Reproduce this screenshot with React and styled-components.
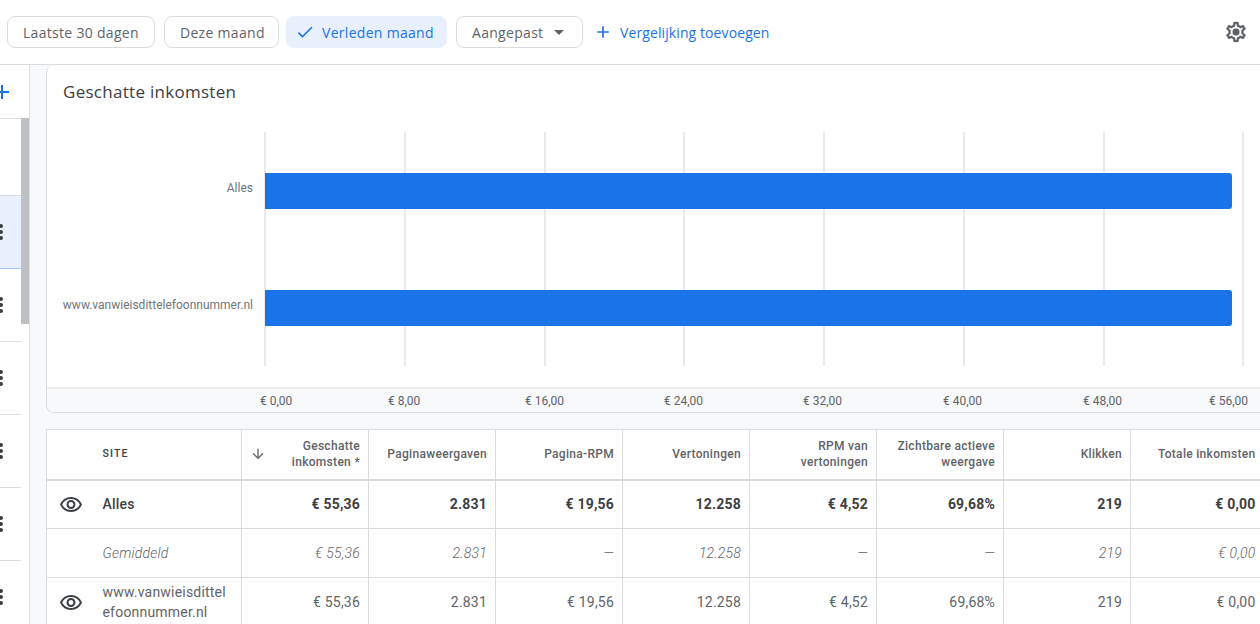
import React from 'react'
import styled, { createGlobalStyle } from 'styled-components'
import {
  MdAdd,
  MdArrowDownward,
  MdArrowDropDown,
  MdCheck,
  MdMoreVert,
  MdOutlineVisibility,
} from 'react-icons/md'

const GlobalStyle = createGlobalStyle`
  html, body {
    margin: 0;
    height: 100%;
    overflow: hidden;
    background: #fff;
    font-family: Roboto, "Liberation Sans", sans-serif;
  }
`

const Page = styled.div`
  position: relative;
  width: 1260px;
  height: 624px;
  overflow: hidden;
  background: #f8f9fa;
`

const Toolbar = styled.div`
  position: absolute;
  left: 0;
  top: 0;
  width: 1260px;
  height: 64px;
  box-sizing: content-box;
  background: #fff;
  border-bottom: 1px solid #dadce0;
`

const Chip = styled.div`
  position: absolute;
  top: 16px;
  left: ${p => p.$left}px;
  width: ${p => p.$width}px;
  height: 32px;
  box-sizing: border-box;
  display: flex;
  align-items: center;
  padding-left: ${p => (p.$active ? 8 : 15)}px;
  border-radius: 8px;
  border: 1px solid ${p => (p.$active ? '#e8f0fe' : '#dadce0')};
  background: ${p => (p.$active ? '#e8f0fe' : '#fff')};
  color: ${p => (p.$active ? '#1a73e8' : '#5f6368')};
  font-family: "Open Sans", sans-serif;
  font-size: 14px;
  letter-spacing: 0.3px;
  font-weight: 500;
  white-space: nowrap;
  svg { flex: none; }
`

const AddLink = styled.div`
  position: absolute;
  left: 593px;
  top: 20px;
  height: 24px;
  display: flex;
  align-items: center;
  gap: 7px;
  color: #1a73e8;
  font-family: "Open Sans", sans-serif;
  font-size: 14px;
  letter-spacing: 0.1px;
  font-weight: 500;
  white-space: nowrap;
`

const Gear = styled.svg`
  position: absolute;
  left: 1224px;
  top: 20px;
  width: 24px;
  height: 24px;
  fill: #5f6368;
  stroke: #5f6368;
  stroke-width: 0.3;
`

const Sidebar = styled.div`
  position: absolute;
  left: 0;
  top: 65px;
  width: 29px;
  height: 559px;
  box-sizing: content-box;
  background: #fff;
  border-right: 1px solid #dadce0;
`

const SidebarAdd = styled.div`
  position: absolute;
  left: -10px;
  top: 15px;
  color: #1a73e8;
  line-height: 0;
`

const SidebarHeadLine = styled.div`
  position: absolute;
  left: 0;
  top: 53px;
  width: 21px;
  height: 1px;
  background: #dadce0;
`

const Scrollbar = styled.div`
  position: absolute;
  left: 21px;
  top: 53px;
  width: 8px;
  height: 206px;
  background: #bdc1c6;
`

const SidebarRow = styled.div`
  position: absolute;
  left: 0;
  top: ${p => p.$top}px;
  width: 21px;
  height: ${p => (p.$selected ? 74 : 73)}px;
  box-sizing: border-box;
  background: ${p => (p.$selected ? '#e8f0fe' : '#fff')};
  border-top: ${p => (p.$selected ? '1px solid #dadce0' : '0')};
  border-bottom: 1px solid ${p => (p.$selected ? '#a8c7fa' : '#dadce0')};
  svg {
    position: absolute;
    left: -11px;
    top: 24px;
    color: #3c4043;
  }
`

const Card = styled.div`
  position: absolute;
  left: 46px;
  top: 65px;
  width: 1240px;
  height: 348px;
  box-sizing: border-box;
  background: #fff;
  border: 1px solid #dadce0;
  border-top: 0;
  border-radius: 8px;
  overflow: hidden;
`

const CardTitle = styled.h2`
  position: absolute;
  left: 16px;
  top: 14px;
  margin: 0;
  color: #3c4043;
  font-family: "Open Sans", sans-serif;
  font-size: 17px;
  letter-spacing: 0.28px;
  line-height: 26px;
  font-weight: 400;
  white-space: nowrap;
`

const GridLine = styled.div`
  position: absolute;
  top: 67px;
  left: ${p => p.$left}px;
  width: 2px;
  height: 234px;
  background: #e8eaed;
`

const Bar = styled.div`
  position: absolute;
  left: 218px;
  top: ${p => p.$top}px;
  width: 967px;
  height: 36px;
  background: #1a73e8;
  border-radius: 0 3px 3px 0;
`

const BarLabel = styled.div`
  position: absolute;
  right: 1032px;
  top: ${p => p.$top}px;
  color: #70757a;
  font-size: 12px;
  line-height: 16px;
  white-space: nowrap;
`

const AxisStrip = styled.div`
  position: absolute;
  left: 0;
  top: 322px;
  width: 100%;
  height: 25px;
  box-sizing: border-box;
  background: #f8f9fa;
  border-top: 2px solid #e8eaed;
`

const AxisLabel = styled.div`
  position: absolute;
  top: 4px;
  left: ${p => p.$left}px;
  color: #5f6368;
  font-size: 12px;
  line-height: 16px;
  white-space: nowrap;
`

const Table = styled.table`
  position: absolute;
  left: 46px;
  top: 429px;
  width: 1217px;
  table-layout: fixed;
  border-collapse: collapse;
  background: #fff;
  border-top: 1px solid #dadce0;
  color: #3c4043;
  font-size: 14px;
`

const Row = styled.tr`
  height: ${p => p.$height}px;
  font-weight: ${p => (p.$bold ? 700 : p.$italic ? 300 : 400)};
  font-style: ${p => (p.$italic ? 'italic' : 'normal')};
  color: ${p => (p.$bold ? '#3c4043' : '#5f6368')};
  border-bottom: 1px solid #dadce0;
`

const HeadRow = styled.tr`
  height: 50px;
  border-bottom: 2px solid #dadce0;
`

const Head = styled.th`
  padding: 0 8px;
  border-left: 1px solid #dadce0;
  text-align: right;
  vertical-align: middle;
  color: #5f6368;
  font-size: 12px;
  line-height: 16px;
  font-weight: 500;
  letter-spacing: 0.3px;
`

const SiteHead = styled(Head)`
  text-align: left;
  color: #3c4043;
  font-size: 10.5px;
  letter-spacing: 1.1px;
  border-left: 0;
  padding: 0 8px 0 0;
`

const SortedHead = styled(Head)`
  position: relative;
  svg {
    position: absolute;
    left: 8px;
    top: 16px;
    color: #5f6368;
  }
`

const EyeHead = styled.th`
  border-left: 1px solid #dadce0;
  padding: 0;
`

const Cell = styled.td`
  padding: 0 8px;
  border-left: 1px solid #dadce0;
  text-align: right;
  vertical-align: middle;
  white-space: nowrap;
  letter-spacing: 0.2px;
`

const EyeCell = styled.td`
  padding: 2px 0 0 12px;
  border-left: 1px solid #dadce0;
  line-height: 0;
  color: #3c4043;
`

const SiteCell = styled.td`
  padding: 0 12px 0 0;
  text-align: left;
  line-height: 20px;
  letter-spacing: 0.2px;
  word-break: break-all;
  font-weight: ${p => (p.$bold ? 500 : 'inherit')};
`

const ticks = [217, 357, 497, 636, 776, 916, 1056, 1195]

const axis = [
  ['€ 0,00', 213],
  ['€ 8,00', 341],
  ['€ 16,00', 478],
  ['€ 24,00', 617],
  ['€ 32,00', 756],
  ['€ 40,00', 896],
  ['€ 48,00', 1036],
  ['€ 56,00', 1162],
]

const headers = ['Paginaweergaven', 'Pagina-RPM', 'Vertoningen']

const sidebarRows = [204, 277, 350, 423, 496]

const rows = [
  {
    id: 'alles',
    bold: true,
    eye: true,
    site: 'Alles',
    height: 49,
    values: ['€ 55,36', '2.831', '€ 19,56', '12.258', '€ 4,52', '69,68%', '219', '€ 0,00'],
  },
  {
    id: 'gemiddeld',
    italic: true,
    site: 'Gemiddeld',
    height: 49,
    values: ['€ 55,36', '2.831', '—', '12.258', '—', '—', '219', '€ 0,00'],
  },
  {
    id: 'site',
    eye: true,
    site: 'www.vanwieisdittelefoonnummer.nl',
    height: 49,
    values: ['€ 55,36', '2.831', '€ 19,56', '12.258', '€ 4,52', '69,68%', '219', '€ 0,00'],
  },
]

export default function App() {
  return (
    <Page>
      <GlobalStyle />
      <Toolbar>
        <Chip $left={7} $width={148}>Laatste 30 dagen</Chip>
        <Chip $left={164} $width={115}>Deze maand</Chip>
        <Chip $left={286} $width={161} $active>
          <MdCheck size={20} style={{ marginRight: 7 }} />
          Verleden maand
        </Chip>
        <Chip $left={456} $width={127}>
          Aangepast
          <MdArrowDropDown size={24} style={{ marginLeft: 4 }} />
        </Chip>
        <AddLink>
          <MdAdd size={20} />
          Vergelijking toevoegen
        </AddLink>
        <Gear viewBox="0 0 24 24">
          <path d="M19.43 12.98c.04-.32.07-.64.07-.98 0-.34-.03-.66-.07-.98l2.11-1.65c.19-.15.24-.42.12-.64l-2-3.46c-.09-.16-.26-.25-.44-.25-.06 0-.12.01-.17.03l-2.49 1c-.52-.4-1.08-.73-1.69-.98l-.38-2.65C14.46 2.18 14.25 2 14 2h-4c-.25 0-.46.18-.49.42l-.38 2.65c-.61.25-1.17.59-1.69.98l-2.49-1c-.06-.02-.12-.03-.18-.03-.17 0-.34.09-.43.25l-2 3.46c-.13.22-.07.49.12.64l2.11 1.65c-.04.32-.07.65-.07.98 0 .33.03.66.07.98l-2.11 1.65c-.19.15-.24.42-.12.64l2 3.46c.09.16.26.25.44.25.06 0 .12-.01.17-.03l2.49-1c.52.4 1.08.73 1.69.98l.38 2.65c.03.24.24.42.49.42h4c.25 0 .46-.18.49-.42l.38-2.65c.61-.25 1.17-.59 1.69-.98l2.49 1c.06.02.12.03.18.03.17 0 .34-.09.43-.25l2-3.46c.12-.22.07-.49-.12-.64l-2.11-1.65zm-1.98-1.71c.04.31.05.52.05.73 0 .21-.02.43-.05.73l-.14 1.13.89.7 1.08.84-.7 1.21-1.27-.51-1.04-.42-.9.68c-.43.32-.84.56-1.25.73l-1.06.43-.16 1.13-.2 1.35h-1.4l-.19-1.35-.16-1.13-1.06-.43c-.43-.18-.83-.41-1.23-.71l-.91-.7-1.06.43-1.27.51-.7-1.21 1.08-.84.89-.7-.14-1.13c-.03-.31-.05-.54-.05-.74s.02-.43.05-.73l.14-1.13-.89-.7-1.08-.84.7-1.21 1.27.51 1.04.42.9-.68c.43-.32.84-.56 1.25-.73l1.06-.43.16-1.13.2-1.35h1.39l.19 1.35.16 1.13 1.06.43c.43.18.83.41 1.23.71l.91.7 1.06-.43 1.27-.51.7 1.21-1.07.85-.89.7.14 1.13z" />
          <circle cx="12" cy="12" r="3.4" />
        </Gear>
      </Toolbar>

      <Sidebar>
        <SidebarAdd><MdAdd size={24} /></SidebarAdd>
        <SidebarHeadLine />
        <Scrollbar />
        <SidebarRow $top={130} $selected><MdMoreVert size={24} /></SidebarRow>
        {sidebarRows.map(top => (
          <SidebarRow key={top} $top={top}><MdMoreVert size={24} /></SidebarRow>
        ))}
      </Sidebar>

      <Card>
        <CardTitle>Geschatte inkomsten</CardTitle>
        {ticks.map(left => <GridLine key={left} $left={left} />)}
        <BarLabel $top={115}>Alles</BarLabel>
        <BarLabel $top={232}>www.vanwieisdittelefoonnummer.nl</BarLabel>
        <Bar $top={108} />
        <Bar $top={225} />
        <AxisStrip>
          {axis.map(([label, left]) => <AxisLabel key={label} $left={left}>{label}</AxisLabel>)}
        </AxisStrip>
      </Card>

      <Table>
        <colgroup>
          <col style={{ width: 56 }} />
          <col style={{ width: 139 }} />
          <col style={{ width: 127 }} />
          <col style={{ width: 127 }} />
          <col style={{ width: 127 }} />
          <col style={{ width: 127 }} />
          <col style={{ width: 127 }} />
          <col style={{ width: 127 }} />
          <col style={{ width: 127 }} />
          <col style={{ width: 133 }} />
        </colgroup>
        <thead>
          <HeadRow>
            <EyeHead />
            <SiteHead>SITE</SiteHead>
            <SortedHead>
              <MdArrowDownward size={16} />
              Geschatte<br />inkomsten *
            </SortedHead>
            {headers.map(h => <Head key={h}>{h}</Head>)}
            <Head>RPM van<br />vertoningen</Head>
            <Head>Zichtbare actieve<br />weergave</Head>
            <Head>Klikken</Head>
            <Head>Totale inkomsten</Head>
          </HeadRow>
        </thead>
        <tbody>
          {rows.map(row => (
            <Row key={row.id} $height={row.height} $bold={row.bold} $italic={row.italic}>
              <EyeCell>{row.eye && <MdOutlineVisibility size={24} />}</EyeCell>
              <SiteCell $bold={row.bold}>{row.site}</SiteCell>
              {row.values.map((v, i) => <Cell key={i}>{v}</Cell>)}
            </Row>
          ))}
        </tbody>
      </Table>
    </Page>
  )
}
